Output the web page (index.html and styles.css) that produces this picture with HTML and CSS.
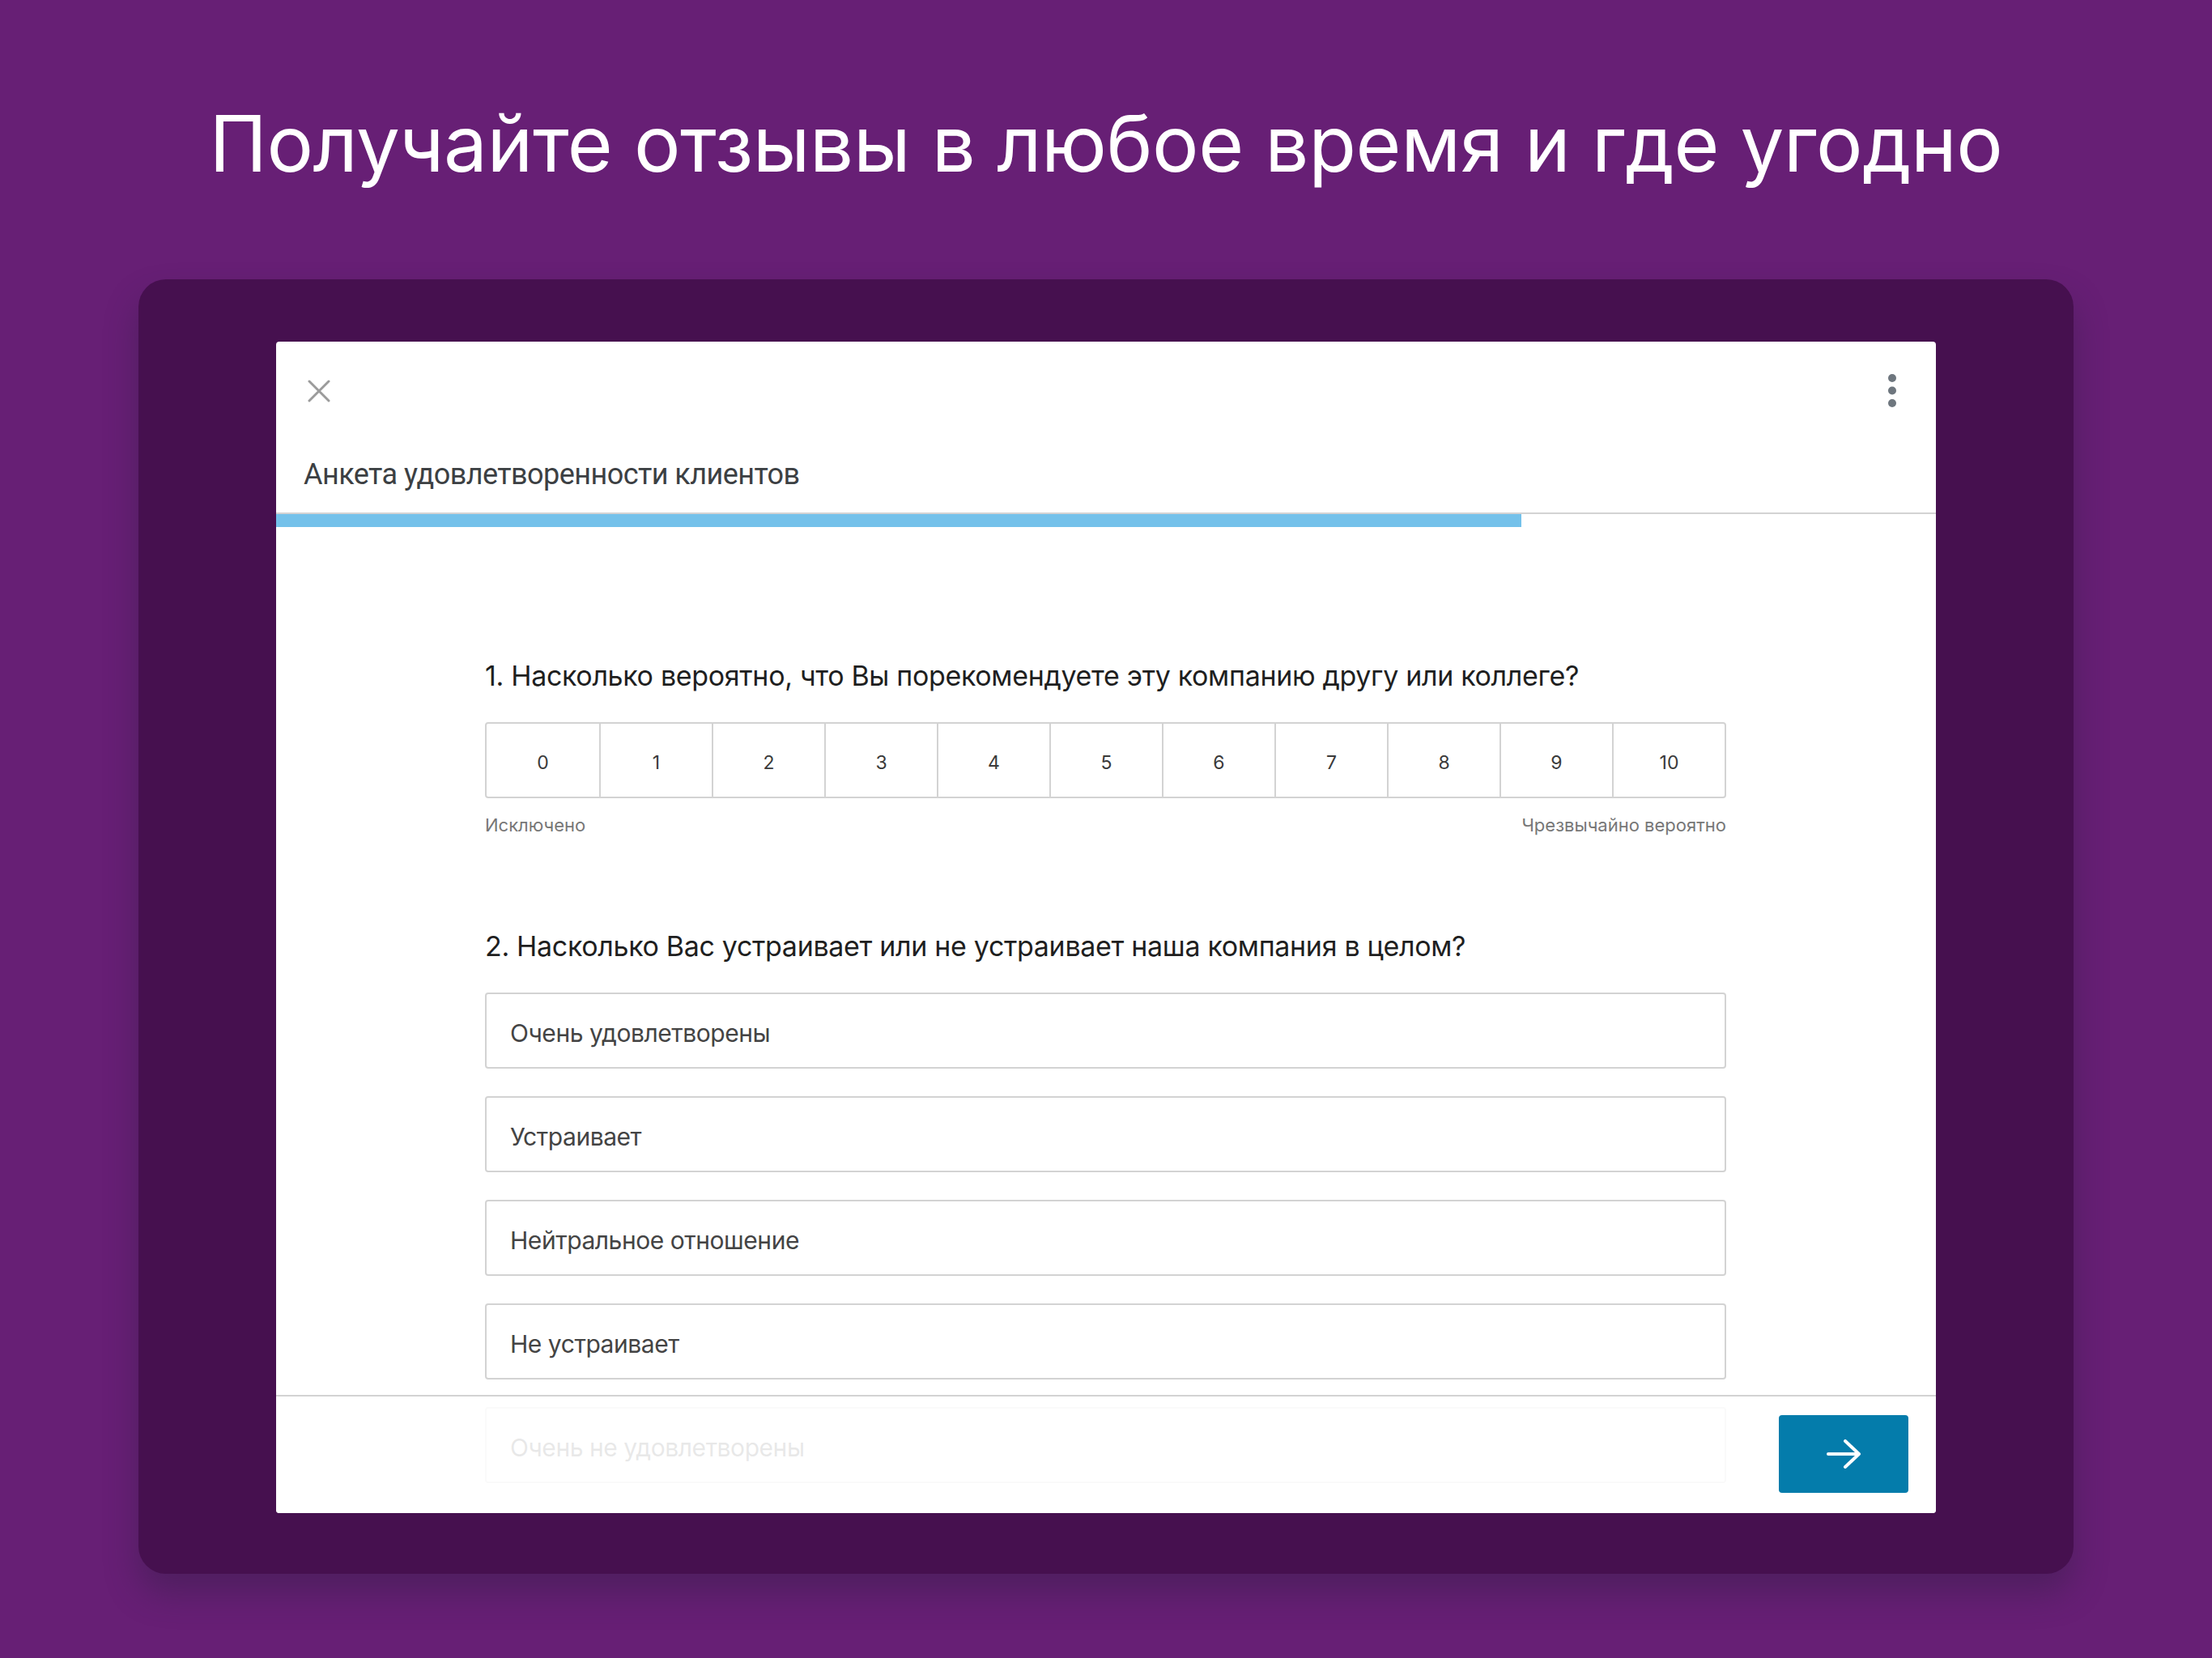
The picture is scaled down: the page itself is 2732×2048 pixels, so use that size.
FILE: index.html
```html
<!DOCTYPE html>
<html lang="ru">
<head>
  <meta charset="UTF-8">
  <title>Анкета удовлетворенности клиентов</title>
  <link rel="stylesheet" href="styles.css">
</head>
<body>

  <h1 class="promo-title">Получайте отзывы в любое время и где угодно</h1>

  <div class="device">
    <div class="card">
      <div class="card-head">
        <div class="head-bar">
          <svg class="icon-close" width="28" height="28" viewBox="0 0 28 28">
            <path d="M2 2 L26 26 M26 2 L2 26" stroke="#9b9b9b" stroke-width="3" stroke-linecap="round" fill="none"/>
          </svg>
          <svg class="icon-more" width="12" height="44" viewBox="0 0 12 44">
            <circle cx="6" cy="6" r="5" fill="#6e767e"/>
            <circle cx="6" cy="21.5" r="5" fill="#6e767e"/>
            <circle cx="6" cy="37" r="5" fill="#6e767e"/>
          </svg>
        </div>
        <div class="survey-name">Анкета удовлетворенности клиентов</div>
      </div>
      <div class="progress"><div class="progress-fill" style="width: 75%"></div></div>

      <div class="card-body">
        <div class="question">1. Насколько вероятно, что Вы порекомендуете эту компанию другу или коллеге?</div>
        <div class="scale">
          <div class="scale-cell">0</div>
          <div class="scale-cell">1</div>
          <div class="scale-cell">2</div>
          <div class="scale-cell">3</div>
          <div class="scale-cell">4</div>
          <div class="scale-cell">5</div>
          <div class="scale-cell">6</div>
          <div class="scale-cell">7</div>
          <div class="scale-cell">8</div>
          <div class="scale-cell">9</div>
          <div class="scale-cell">10</div>
        </div>
        <div class="scale-labels">
          <span>Исключено</span>
          <span>Чрезвычайно вероятно</span>
        </div>

        <div class="question question-second">2. Насколько Вас устраивает или не устраивает наша компания в целом?</div>
        <div class="option">Очень удовлетворены</div>
        <div class="option">Устраивает</div>
        <div class="option">Нейтральное отношение</div>
        <div class="option">Не устраивает</div>
        <div class="option">Очень не удовлетворены</div>
      </div>

      <!-- нижняя панель поверх списка -->
      <div class="card-foot">
        <button class="btn-next">
          <svg width="44" height="36" viewBox="0 0 44 36">
            <path d="M3 18 H41 M24 2 L41 18 L24 34" stroke="#fff" stroke-width="4" stroke-linecap="round" stroke-linejoin="round" fill="none"/>
          </svg>
        </button>
      </div>
    </div>
  </div>

</body>
</html>
```

FILE: styles.css
```css
body {
  margin: 0;
  padding: 129px 0 0;
  background-color: #671f75;
  font-family: Inter, 'Noto Sans', sans-serif;
  height: 2048px;
  box-sizing: border-box;
  overflow: hidden;
}
.promo-title {
  margin: 0;
  font-size: 96px;
  line-height: 96px;
  font-weight: 400;
  letter-spacing: -0.4px;
  color: #fff;
  text-align: center;
}
.device {
  width: 2390px;
  margin: 120px auto 0;
  padding: 77px 170px 75px;
  box-sizing: border-box;
  background: #46104f;
  border-radius: 34px;
  box-shadow: 0 24px 40px rgba(50, 30, 70, 0.45);
}
.card {
  position: relative;
  height: 1447px;
  background: #fff;
  border-radius: 4px;
  overflow: hidden;
}
.head-bar {
  height: 122px;
  padding: 0 49px 0 39px;
  display: flex;
  align-items: center;
  justify-content: space-between;
}
.icon-more {
  margin-right: -1px;
}
.survey-name {
  padding: 20px 34px 25px;
  font-family: Roboto, 'Noto Sans', sans-serif;
  font-size: 36px;
  line-height: 44px;
  letter-spacing: -0.55px;
  color: #3c4043;
}
.progress {
  border-top: 2px solid #d3d3d3;
  height: 16px;
}
.progress-fill {
  height: 100%;
  background: #74c1ea;
}
.card-body {
  padding: 162px 259px 0 258px;
}
.question {
  font-size: 34px;
  line-height: 44px;
  letter-spacing: -0.33px;
  color: #1f1f1f;
}
.question-second {
  margin-top: 114px;
}
.scale {
  margin-top: 35px;
  display: grid;
  grid-template-columns: repeat(11, 1fr);
  height: 94px;
  box-sizing: border-box;
  border: 2px solid #d3d3d3;
  border-radius: 4px;
}
.scale-cell {
  display: flex;
  align-items: center;
  justify-content: center;
  padding-top: 5px;
  font-size: 23px;
  color: #3a3a3a;
}
.scale-cell + .scale-cell {
  border-left: 2px solid #d3d3d3;
}
.scale-labels {
  margin-top: 19px;
  display: flex;
  justify-content: space-between;
  font-size: 22px;
  line-height: 28px;
  color: #777;
}
.question + .option {
  margin-top: 35px;
}
.option {
  height: 94px;
  box-sizing: border-box;
  margin-bottom: 34px;
  padding: 6px 29px 0;
  border: 2px solid #d3d3d3;
  border-radius: 4px;
  font-size: 30px;
  line-height: 84px;
  letter-spacing: -0.45px;
  color: #444;
}
.card-foot {
  position: absolute;
  left: 0;
  right: 0;
  bottom: 0;
  height: 146px;
  box-sizing: border-box;
  border-top: 2px solid #d3d3d3;
  background: rgba(255, 255, 255, 0.88);
  display: flex;
  align-items: center;
  justify-content: flex-end;
  padding: 0 34px 2px;
}
.btn-next {
  width: 160px;
  height: 96px;
  border: none;
  border-radius: 4px;
  background-color: #047cab;
  display: flex;
  align-items: center;
  justify-content: center;
  cursor: pointer;
}
```
